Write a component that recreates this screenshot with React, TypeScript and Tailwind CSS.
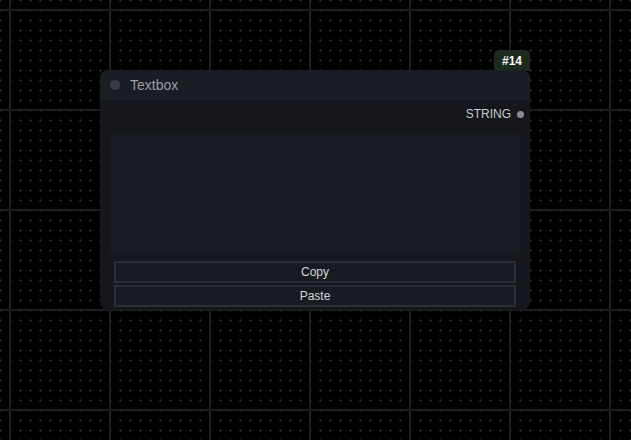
import React from 'react'

function CanvasGrid() {
  return (
    <svg className="absolute inset-0" width="631" height="440" shapeRendering="crispEdges">
      <defs>
        <pattern id="dots" x="5" y="5" width="10" height="10" patternUnits="userSpaceOnUse">
          <rect x="4" y="5" width="3" height="1" fill="#25272b" />
          <rect x="5" y="4" width="1" height="3" fill="#25272b" />
        </pattern>
        <pattern id="lines" x="0" y="0" width="100" height="100" patternUnits="userSpaceOnUse">
          <rect x="9" y="0" width="2" height="100" fill="#1c1e22" />
          <rect x="0" y="9" width="100" height="2" fill="#1c1e22" />
        </pattern>
      </defs>
      <rect width="631" height="440" fill="url(#dots)" />
      <rect width="631" height="440" fill="url(#lines)" />
    </svg>
  )
}

export default function App() {
  return (
    <div
      className="relative h-[440px] w-[631px] overflow-hidden bg-black"
      style={{ fontFamily: '"Liberation Sans", Arial, sans-serif' }}
    >
      <CanvasGrid />

      {/* node id badge */}
      <div className="absolute left-[494px] top-[50px] flex h-[21px] w-[36px] items-center justify-center rounded-t-[5px] rounded-b-[3px] bg-[#1b2b1e] text-[12px] font-bold text-white">
        #14
      </div>

      {/* Textbox node */}
      <div className="absolute left-[100px] top-[70px] flex h-[240px] w-[430px] flex-col overflow-hidden rounded-[8px] bg-[#15171d]">
        <div className="flex h-[31px] items-center gap-[10px] border-b border-[#121419] bg-[#1a1d23] px-[10px]">
          <span className="h-[10px] w-[10px] rounded-full bg-[#383c45]" />
          <span className="text-[14px] text-[#9a9da4]">Textbox</span>
        </div>

        <div className="flex h-[26px] items-center justify-end gap-[6px] pr-[6px]">
          <span className="text-[12px] text-[#c9cbd0]">STRING</span>
          <span className="h-[7px] w-[7px] rounded-full bg-[#8b8b95]" />
        </div>

        <div className="mx-[10px] mt-[8px] h-[117px] bg-[#1a1c23]" />

        <div className="mt-[9px] flex flex-col gap-[2px] px-[14px]">
          <button className="h-[22px] border-2 border-[#2b2e36] bg-[#191b22] text-[12px] text-[#d4d5d8]">
            Copy
          </button>
          <button className="h-[22px] border-2 border-[#2b2e36] bg-[#191b22] text-[12px] text-[#d4d5d8]">
            Paste
          </button>
        </div>
      </div>
    </div>
  )
}
